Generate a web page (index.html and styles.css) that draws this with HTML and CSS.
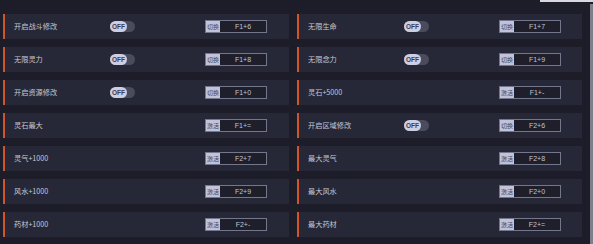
FILE: index.html
```html
<!DOCTYPE html>
<html lang="zh">
<head>
<meta charset="utf-8">
<title>修改器</title>
<link rel="stylesheet" href="styles.css">
</head>
<body>
<div class="topline"></div>
<div class="page">
  <div class="grid">
    <div class="card"><span class="label">开启战斗修改</span><span class="slot"><span class="toggle"><span class="knob">OFF</span></span></span><span class="key"><span class="act">切换</span><span class="combo">F1+6</span></span></div>
    <div class="card"><span class="label">无限生命</span><span class="slot"><span class="toggle"><span class="knob">OFF</span></span></span><span class="key"><span class="act">切换</span><span class="combo">F1+7</span></span></div>
    <div class="card"><span class="label">无限灵力</span><span class="slot"><span class="toggle"><span class="knob">OFF</span></span></span><span class="key"><span class="act">切换</span><span class="combo">F1+8</span></span></div>
    <div class="card"><span class="label">无限念力</span><span class="slot"><span class="toggle"><span class="knob">OFF</span></span></span><span class="key"><span class="act">切换</span><span class="combo">F1+9</span></span></div>
    <div class="card"><span class="label">开启资源修改</span><span class="slot"><span class="toggle"><span class="knob">OFF</span></span></span><span class="key"><span class="act">切换</span><span class="combo">F1+0</span></span></div>
    <div class="card"><span class="label">灵石+5000</span><span class="slot"></span><span class="key"><span class="act">激活</span><span class="combo">F1+-</span></span></div>
    <div class="card"><span class="label">灵石最大</span><span class="slot"></span><span class="key"><span class="act">激活</span><span class="combo">F1+=</span></span></div>
    <div class="card"><span class="label">开启区域修改</span><span class="slot"><span class="toggle"><span class="knob">OFF</span></span></span><span class="key"><span class="act">切换</span><span class="combo">F2+6</span></span></div>
    <div class="card"><span class="label">灵气+1000</span><span class="slot"></span><span class="key"><span class="act">激活</span><span class="combo">F2+7</span></span></div>
    <div class="card"><span class="label">最大灵气</span><span class="slot"></span><span class="key"><span class="act">激活</span><span class="combo">F2+8</span></span></div>
    <div class="card"><span class="label">风水+1000</span><span class="slot"></span><span class="key"><span class="act">激活</span><span class="combo">F2+9</span></span></div>
    <div class="card"><span class="label">最大风水</span><span class="slot"></span><span class="key"><span class="act">激活</span><span class="combo">F2+0</span></span></div>
    <div class="card"><span class="label">药材+1000</span><span class="slot"></span><span class="key"><span class="act">激活</span><span class="combo">F2+-</span></span></div>
    <div class="card"><span class="label">最大药材</span><span class="slot"></span><span class="key"><span class="act">激活</span><span class="combo">F2+=</span></span></div>
  </div>
  <div class="scrollbar"></div>
</div>
</body>
</html>
```
FILE: styles.css
```css
html, body {
  margin: 0;
  padding: 0;
  background: #1c1d28;
  width: 593px;
  height: 244px;
  overflow: hidden;
  font-family: "Noto Sans CJK SC", "Noto Sans", sans-serif;
}
.topline {
  height: 2px;
  margin-left: 540px;
  background: #d8d8de;
}
.page {
  display: flex;
  gap: 8px;
  padding-left: 3px;
  padding-top: 12px;
  height: 230px;
}
.grid {
  display: grid;
  grid-template-columns: 286px 285px;
  grid-auto-rows: 25px;
  column-gap: 8px;
  row-gap: 8px;
}
.card {
  display: grid;
  grid-template-columns: 96px 95px 62px;
  align-items: center;
  padding-left: 9px;
  background: #262838;
  border-left: 2px solid #d0562a;
  box-sizing: border-box;
}
.label {
  color: #c6c7d2;
  font-size: 7.2px;
  line-height: 1;
  white-space: nowrap;
}
.slot {
  display: flex;
  align-items: center;
}
.toggle {
  display: flex;
  width: 25px;
  height: 11px;
  border-radius: 6px;
  background: #4a4c5d;
}
.knob {
  display: flex;
  align-items: center;
  justify-content: center;
  width: 17px;
  height: 11px;
  border-radius: 6px;
  background: #cdcee4;
  color: #3b3c4e;
  font-family: "Liberation Sans", sans-serif;
  font-size: 6.5px;
  font-weight: bold;
}
.key {
  display: flex;
  height: 13px;
  border: 1px solid #74768c;
  background: #1e1f2b;
  box-sizing: border-box;
}
.act {
  display: flex;
  align-items: center;
  justify-content: center;
  width: 14px;
  background: #c2c3da;
  color: #3e3f52;
  font-size: 6px;
  white-space: nowrap;
  overflow: hidden;
}
.combo {
  flex: 1;
  display: flex;
  align-items: center;
  justify-content: center;
  color: #c2c3ce;
  font-family: "Liberation Sans", sans-serif;
  font-size: 7px;
}
.scrollbar {
  width: 3px;
  margin-top: -10px;
  height: 242px;
  background: #7e7f8c;
}
```
